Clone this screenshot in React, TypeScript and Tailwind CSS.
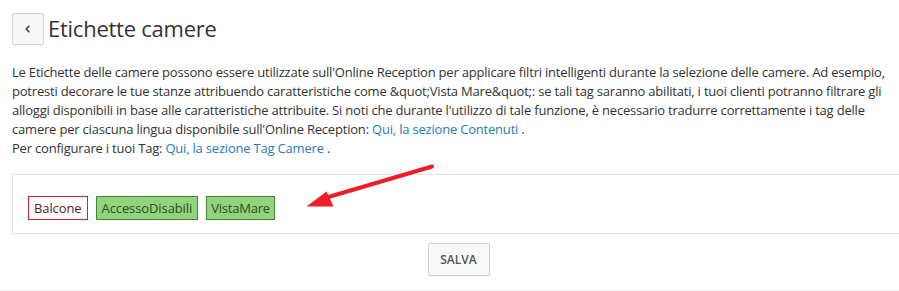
import React from "react";

export default function App() {
  const font = { fontFamily: '"Open Sans", "Noto Sans", sans-serif' };
  return (
    <div className="relative w-[899px] h-[291px] overflow-hidden bg-white text-[#333]" style={font}>
      <div className="w-[917px] px-[12px]">
        <div className="flex items-center pt-[13px] gap-[4px]">
          <button className="w-[32px] h-[32px] flex items-center justify-center border border-[#d2d2d2] bg-[#f7f7f7] rounded-[2px]">
            <svg width="10" height="10" viewBox="0 0 10 10">
              <path d="M6.3 1.8 L3.3 5 L6.3 8.2" fill="none" stroke="#444" strokeWidth="1.6" />
            </svg>
          </button>
          <h1 className="text-[22px] leading-[32px] font-normal text-[#333] -mt-[2px] tracking-[-0.25px]">Etichette camere</h1>
        </div>
        <p className="mt-[18px] text-[13px] leading-[19px] text-[#333] w-[880px] tracking-[-0.2px]">
          Le Etichette delle camere possono essere utilizzate sull'Online Reception per applicare filtri intelligenti durante la selezione delle camere. Ad esempio, potresti decorare le tue stanze attribuendo caratteristiche come &amp;quot;Vista Mare&amp;quot;: se tali tag saranno abilitati, i tuoi clienti potranno filtrare gli alloggi disponibili in base alle caratteristiche attribuite. Si noti che durante l'utilizzo di tale funzione, è necessario tradurre correttamente i tag delle camere per ciascuna lingua disponibile sull'Online Reception:{" "}
          <a className="text-[#2a7ab8]">Qui, la sezione Contenuti</a> .
          <br />
          Per configurare i tuoi Tag: <a className="text-[#2a7ab8]">Qui, la sezione Tag Camere</a> .
        </p>
        <div className="mt-[16px] border border-[#e4e4e4] h-[60px] shadow-[0_0_3px_rgba(0,0,0,0.04)] flex items-start gap-[8px] pl-[15px] pt-[21px]">
          <span className="h-[24px] px-[5px] border border-[#c8243a] bg-[#fffafa] text-[13px] leading-[22px] text-[#4a2a2a] tracking-[-0.1px]">Balcone</span>
          <span className="h-[24px] px-[5px] border border-[#3f8a2e] bg-[#93d37e] text-[13px] leading-[22px] text-[#2b4d22] tracking-[-0.1px]">AccessoDisabili</span>
          <span className="h-[24px] px-[4px] border border-[#3f8a2e] bg-[#93d37e] text-[13px] leading-[22px] text-[#2b4d22] tracking-[-0.2px]">VistaMare</span>
        </div>
        <div className="flex justify-center mt-[9px]">
          <button className="h-[33px] w-[62px] border border-[#cfcfcf] bg-[#f8f8f8] text-[12px] font-semibold text-[#555] rounded-[2px] shadow-[0_1px_1px_rgba(0,0,0,0.06)]">
            SALVA
          </button>
        </div>
      </div>
      <div className="absolute left-0 right-0 top-[290px] border-t border-[#ececec]" />
      <svg className="absolute left-0 top-0 pointer-events-none" width="899" height="291">
        <line x1="432" y1="166.5" x2="325" y2="198" stroke="#ee1d26" strokeWidth="4" strokeLinecap="round" />
        <polygon points="306.5,206.5 326.5,191.5 333.5,206.5" fill="#ee1d26" />
      </svg>
    </div>
  );
}
